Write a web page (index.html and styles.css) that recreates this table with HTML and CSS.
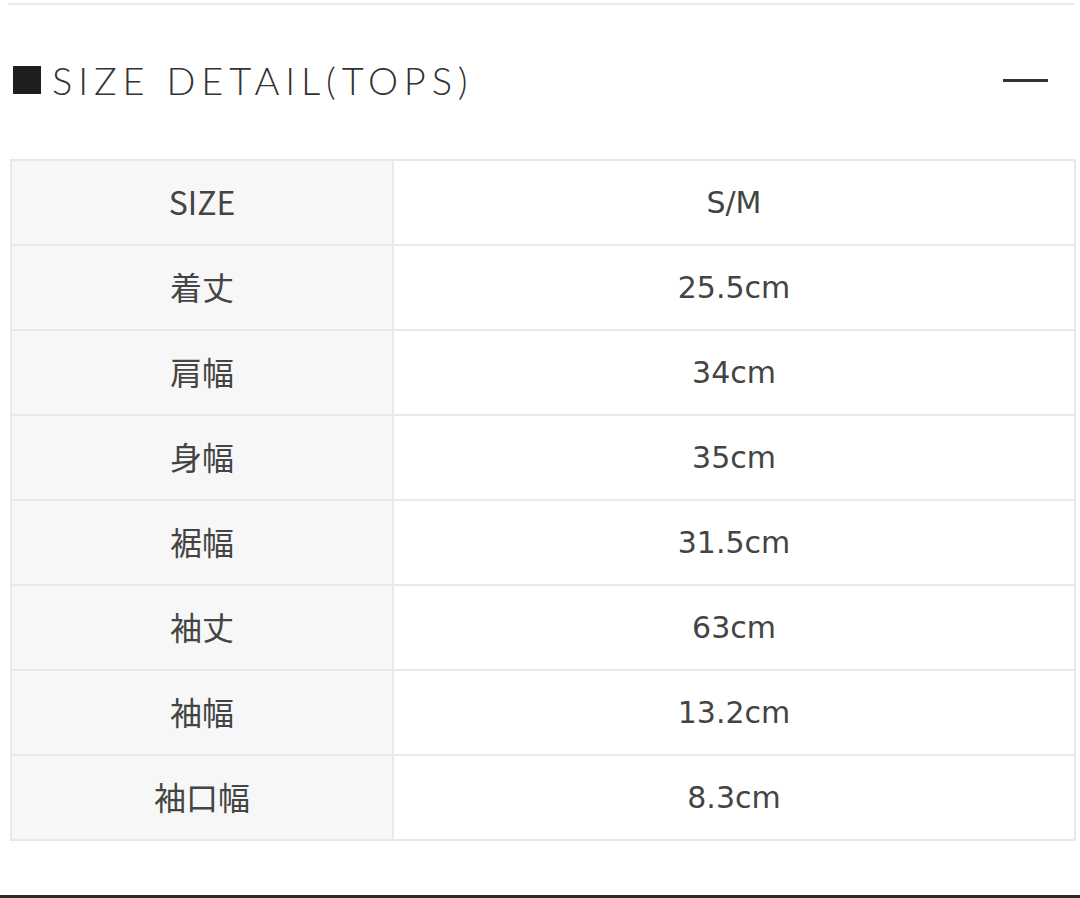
FILE: index.html
```html
<!DOCTYPE html>
<html lang="ja">
<head>
<meta charset="utf-8">
<title>SIZE DETAIL(TOPS)</title>
<link rel="stylesheet" href="styles.css">
</head>
<body>
<div class="topline"></div>
<div class="head">
  <h2 class="title"><span class="square"></span><span class="title-text">SIZE DETAIL(TOPS)</span></h2>
  <span class="minus"></span>
</div>
<table class="size-table">
  <tbody>
    <tr><th>SIZE</th><td>S/M</td></tr>
    <tr><th>着丈</th><td>25.5cm</td></tr>
    <tr><th>肩幅</th><td>34cm</td></tr>
    <tr><th>身幅</th><td>35cm</td></tr>
    <tr><th>裾幅</th><td>31.5cm</td></tr>
    <tr><th>袖丈</th><td>63cm</td></tr>
    <tr><th>袖幅</th><td>13.2cm</td></tr>
    <tr><th>袖口幅</th><td>8.3cm</td></tr>
  </tbody>
</table>
<div class="bottomline"></div>
</body>
</html>
```
FILE: styles.css
```css
html, body {
  margin: 0;
  padding: 0;
}
body {
  width: 1080px;
  height: 898px;
  display: flex;
  flex-direction: column;
  background: #ffffff;
  overflow: hidden;
}
.topline {
  margin: 3px 5px 0 8px;
  height: 2px;
  background: #ececec;
}
.head {
  margin-top: 47px;
  height: 56px;
  display: flex;
  align-items: center;
  justify-content: space-between;
  padding: 0 32px 0 13px;
}
.title {
  margin: 0;
  display: flex;
  align-items: center;
  gap: 11px;
  font-family: "Lato", "DejaVu Sans", sans-serif;
  font-weight: 300;
  font-size: 38px;
  letter-spacing: 0.154em;
  color: #333333;
  line-height: 1;
}
.square {
  width: 28px;
  height: 28px;
  background: #1e1e1e;
  flex: none;
}
.minus {
  width: 45px;
  height: 3px;
  background: #333333;
}
.size-table {
  margin: 51px 0 0 10px;
  width: 1066px;
  border-collapse: collapse;
  table-layout: fixed;
}
.size-table tr {
  height: 85px;
}
.size-table th,
.size-table td {
  border: 2px solid #e9e9e9;
  text-align: center;
  vertical-align: middle;
  padding: 0;
  color: #444444;
}
.size-table th {
  width: 380px;
  background: #f7f7f7;
  font-family: "Noto Sans CJK JP", sans-serif;
  font-weight: 400;
  font-size: 32px;
  padding-bottom: 4px;
}
.size-table td {
  background: #ffffff;
  font-family: "DejaVu Sans", sans-serif;
  font-size: 30px;
}
.bottomline {
  margin-top: auto;
  height: 3px;
  background: #2b2b2b;
}
```
